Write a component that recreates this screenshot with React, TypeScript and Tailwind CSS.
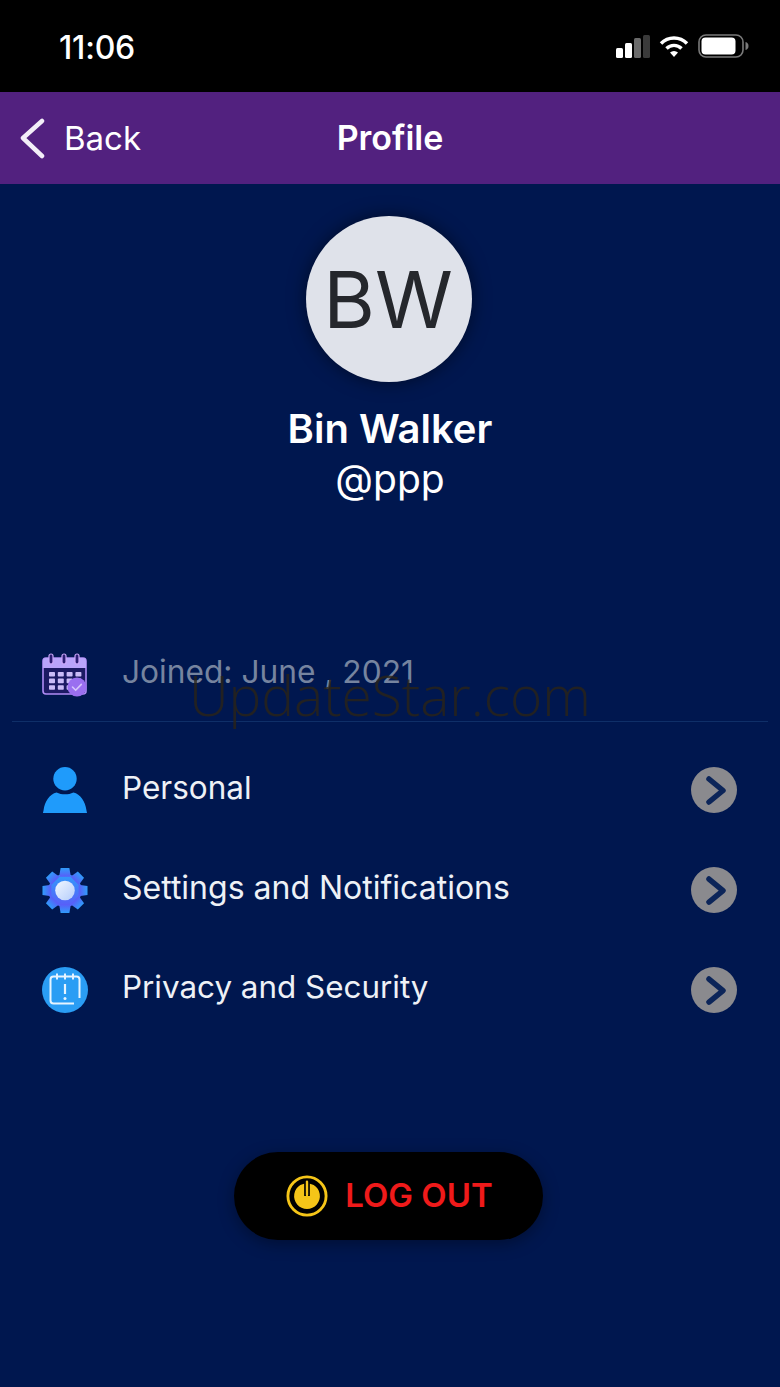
const menu = [
  { label: 'Personal', size: 'text-[31.5px]', icon: <PersonIcon /> },
  { label: 'Settings and Notifications', size: 'text-[32px]', icon: <GearIcon /> },
  { label: 'Privacy and Security', size: 'text-[31.4px]', icon: <NoticeIcon /> },
]

function CalendarIcon() {
  const cells = [0, 1, 2, 3]
  return (
    <svg width="46" height="44" viewBox="0 0 46 44">
      <rect x="1" y="5" width="43" height="36" rx="3" fill="#1c1a63" stroke="#b08cf5" strokeWidth="1.6" />
      <path d="M1 15V8a3 3 0 0 1 3-3h37a3 3 0 0 1 3 3v7z" fill="#b9a4fb" />
      {[9, 22, 35].map((x) => (
        <rect key={x} x={x - 2} y="1" width="4" height="10" rx="2" fill="#2b1d73" stroke="#c9a6f8" strokeWidth="1.2" />
      ))}
      {cells.map((c) =>
        [0, 1, 2].map((r) => (
          <rect key={`${c}-${r}`} x={7 + c * 8.8} y={19 + r * 6.6} width="6" height="4.6" rx="0.8" fill="#cbbcf8" />
        )),
      )}
      <circle cx="35" cy="34" r="9.5" fill="#9a6ff0" />
      <path d="M30.5 34l3.2 3.2 5.6-5.8" fill="none" stroke="#d6c6fb" strokeWidth="1.6" strokeLinecap="round" />
    </svg>
  )
}

function PersonIcon() {
  return (
    <svg width="46" height="46" viewBox="0 0 46 46">
      <circle cx="23" cy="11.700" r="11.700" fill="#1f9bfb" />
      <path d="M1 46c0-.8.4-1.600.6-3 1-8 6-16 13-17.500 2.500 1.300 5.500 1.800 8.400 1.800s5.900-.5 8.400-1.800c7 1.500 12 9.500 13 17.500.2 1.400.6 2.200.6 3z" fill="#1f9bfb" />
    </svg>
  )
}

function GearIcon() {
  const angles = [0, 45, 90, 135, 180, 225, 270, 315]
  return (
    <svg width="47" height="47" viewBox="0 0 47 47">
      <defs>
        <linearGradient id="gear" x1="0" y1="0" x2="0" y2="1">
          <stop offset="0" stopColor="#2f9cfb" />
          <stop offset="1" stopColor="#5a5cf8" />
        </linearGradient>
        <linearGradient id="hub" x1="0" y1="0" x2="1" y2="1">
          <stop offset="0" stopColor="#f1f7ff" />
          <stop offset="1" stopColor="#b4cdfb" />
        </linearGradient>
      </defs>
      <g fill="url(#gear)">
        <circle cx="23.500" cy="23.500" r="17" />
        {angles.map((a) => (
          <path key={a} d="M19 0.500h9l1.500 9h-12z" transform={`rotate(${a} 23.500 23.500)`} />
        ))}
      </g>
      <circle cx="23.500" cy="23.500" r="10" fill="url(#hub)" />
    </svg>
  )
}

function NoticeIcon() {
  return (
    <svg width="46" height="46" viewBox="0 0 46 46">
      <circle cx="23" cy="23" r="23" fill="#2a9df4" />
      <path d="M32 36.500H11.500a3 3 0 0 1-3-3V12.500a3 3 0 0 1 3-3h23a3 3 0 0 1 3 3V31" fill="none" stroke="#e6f4ff" strokeWidth="2" />
      <path d="M15 6.500v6M23 6.500v6M31 6.500v6" stroke="#e6f4ff" strokeWidth="2" />
      <path d="M23 17v10" stroke="#e6f4ff" strokeWidth="2.200" />
      <circle cx="23" cy="31.500" r="1.500" fill="#e6f4ff" />
    </svg>
  )
}

function PowerIcon() {
  return (
    <svg width="42" height="42" viewBox="0 0 44 44">
      <circle cx="22" cy="22" r="20" fill="none" stroke="#f5c518" strokeWidth="3" />
      <path d="M15 10.500a13.500 13.500 0 1 0 14 0L22 8z" fill="#f5c518" />
      <path d="M22 6v16" stroke="#000" strokeWidth="6" />
      <path d="M22 7v14" stroke="#f5c518" strokeWidth="2.500" strokeLinecap="round" />
    </svg>
  )
}

function StatusIcons() {
  return (
    <div className="flex items-center gap-[9px]">
      <svg width="35" height="23" viewBox="0 0 35 23">
        <rect x="1" y="13" width="7" height="10" rx="1.500" fill="#fff" />
        <rect x="10" y="8" width="7" height="15" rx="1.500" fill="#fff" />
        <rect x="19" y="3" width="7" height="20" rx="1.500" fill="#6a6a6a" />
        <rect x="28" y="0" width="7" height="23" rx="1.500" fill="#3a3a3a" />
      </svg>
      <svg width="30" height="23" viewBox="0 0 30 23">
        <path d="M2 8.500a18 18 0 0 1 26 0" fill="none" stroke="#fff" strokeWidth="3.400" />
        <path d="M7.500 13.500a10.500 10.500 0 0 1 15 0" fill="none" stroke="#fff" strokeWidth="3.400" />
        <path d="M11 17.500a6 6 0 0 1 8 0L15 22z" fill="#fff" />
      </svg>
      <svg width="51" height="24" viewBox="0 0 51 24">
        <rect x="1" y="1" width="44" height="22" rx="7" fill="none" stroke="#7a7a7a" strokeWidth="1.600" />
        <rect x="3.500" y="3.500" width="34" height="17" rx="4" fill="#fff" />
        <path d="M47.500 8c2 .5 3 2 3 4s-1 3.500-3 4z" fill="#7a7a7a" />
      </svg>
    </div>
  )
}

export default function App() {
  return (
    <div className="relative flex h-[1387px] w-[780px] flex-col overflow-hidden bg-[#00174f] font-['Inter',sans-serif] text-white">
      {/* Status bar */}
      <div className="flex h-[92px] items-center justify-between bg-black pl-[59px] pr-[31px]">
        <span className="pt-[4px] text-[32px] font-medium tracking-[-0.2px]">11:06</span>
        <StatusIcons />
      </div>

      {/* Header */}
      <div className="relative flex h-[92px] items-center justify-center bg-[#52217f] pt-[2px]">
        <button className="absolute left-[14px] flex items-center gap-[8px] text-[33px]">
          <svg width="42" height="42" viewBox="0 0 42 42">
            <path d="M28 3L9 20l19 18" fill="none" stroke="#f3eef8" strokeWidth="4.500" strokeLinecap="round" strokeLinejoin="round" />
          </svg>
          Back
        </button>
        <h1 className="mb-[4px] text-[34px] font-semibold">Profile</h1>
      </div>

      {/* Avatar */}
      <div className="flex flex-col items-center pt-[32px]">
        <div className="-ml-[2px] flex h-[166px] w-[166px] items-center justify-center rounded-full bg-[#dfe2ea] pr-[2px] text-[79px] text-[#25272c] shadow-[0_0_18px_rgba(0,0,0,0.5)]">
          BW
        </div>
        <div className="mt-[22px] text-[40px] leading-[50px] font-semibold">Bin Walker</div>
        <div className="text-[39px] leading-[50px]">@ppp</div>
      </div>

      {/* Joined */}
      <div className="mx-[12px] mt-[146px] flex h-[72px] items-center border-b border-[#0f2f68] pb-[22px] pl-[30px]">
        <CalendarIcon />
        <span className="mb-[6px] ml-[34px] text-[31.7px] text-[#76849f]">Joined: June , 2021</span>
      </div>

      {/* Menu */}
      <div className="mt-[18px] flex flex-col">
        {menu.map((item) => (
          <div key={item.label} className="flex h-[100px] items-center pl-[42px] pr-[43px]">
            <div className="flex w-[46px] justify-center">{item.icon}</div>
            <span className={`mb-[4px] ml-[34px] flex-1 text-[#eef1f6] ${item.size}`}>{item.label}</span>
            <div className="flex h-[46px] w-[46px] items-center justify-center rounded-full bg-[#8a8a8e]">
              <svg width="46" height="46" viewBox="0 0 46 46">
                <path d="M18 12l14 11.500L18 35" fill="none" stroke="#0c2559" strokeWidth="5.500" strokeLinecap="round" strokeLinejoin="round" />
              </svg>
            </div>
          </div>
        ))}
      </div>

      {/* Log out */}
      <div className="mt-[112px] flex justify-center pr-[3px]">
        <button className="flex h-[88px] w-[309px] items-center justify-center gap-[17px] rounded-full bg-black pl-[2px] shadow-[0_4px_16px_rgba(0,0,0,0.35)]">
          <PowerIcon />
          <span className="text-[33px] font-semibold text-[#ef1a1a]">LOG OUT</span>
        </button>
      </div>

      {/* Watermark */}
      <div className="pointer-events-none absolute left-[189px] top-[667px] font-['Open_Sans',sans-serif] text-[55px] leading-none font-light text-[#2a2417]/80">
        UpdateStar.com
      </div>
    </div>
  )
}
